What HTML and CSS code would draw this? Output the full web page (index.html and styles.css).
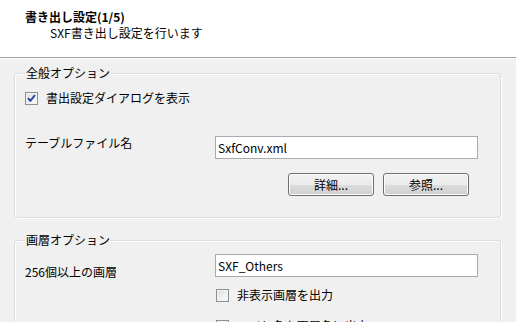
FILE: index.html
```html
<!DOCTYPE html>
<html lang="ja">
<head>
    <meta charset="UTF-8">
    <title>書き出し設定</title>
    <link rel="stylesheet" href="styles.css">
</head>
<body>
    <header class="wizard-head">
        <div class="head-title">書き出し設定(1/5)</div>
        <div class="head-sub">SXF書き出し設定を行います</div>
    </header>

    <main class="wizard-body">
        <!-- 全般 -->
        <fieldset class="group group-general">
            <legend>全般オプション</legend>
            <label class="check">
                <span class="box">
                    <svg width="11" height="11" viewBox="0 0 11 11"><path d="M2 5.2 L4.3 7.8 L9 2.2" fill="none" stroke="#21409a" stroke-width="1.9"/></svg>
                </span>
                書出設定ダイアログを表示
            </label>
            <div class="field-row">
                <span class="field-label">テーブルファイル名</span>
                <input class="text-input" type="text" value="SxfConv.xml">
            </div>
            <div class="button-row">
                <button class="btn">詳細...</button>
                <button class="btn">参照...</button>
            </div>
        </fieldset>

        <!-- 画層 -->
        <fieldset class="group group-layer">
            <legend>画層オプション</legend>
            <div class="field-row">
                <span class="field-label label-low">256個以上の画層</span>
                <input class="text-input" type="text" value="SXF_Others">
            </div>
            <label class="check check-indent">
                <span class="box"></span>
                非表示画層を出力
            </label>
            <label class="check check-indent check-next">
                <span class="box"></span>
                レイヤ名を画層名に出力
            </label>
        </fieldset>
    </main>
</body>
</html>
```

FILE: styles.css
```css
body {
    margin: 0;
    width: 516px;
    height: 322px;
    overflow: hidden;
    background-color: #F0F0F0;
    font-family: "Noto Sans CJK JP", sans-serif;
    font-size: 12px;
    color: #000;
}

.wizard-head {
    box-sizing: border-box;
    height: 58px;
    padding: 9px 0 0 25px;
    background-color: #FFFFFF;
    border-bottom: 1px solid #A0A0A0;
    box-shadow: 0 1px 0 #FFFFFF;
    line-height: 16px;
}

.head-title {
    font-weight: bold;
}

.head-sub {
    padding-left: 25px;
}

.group {
    margin: 8px 15px 0 14px;
    padding: 8px 22px 21px 10px;
    border: 1px solid #D5DFE5;
    border-radius: 3px;
    box-shadow: inset 1px 1px 0 #FFFFFF, 1px 1px 0 #FFFFFF;
}

.group legend {
    padding: 0 1px;
    line-height: 14px;
    background-color: #F0F0F0;
}

.group-layer {
    margin-top: 15px;
    padding-top: 7px;
}

.check {
    display: flex;
    align-items: center;
    gap: 8px;
    height: 20px;
    line-height: 14px;
}

.check-indent {
    margin: 6px 0 0 191px;
}

.check-next {
    margin-top: 11px;
}

.box {
    box-sizing: border-box;
    width: 13px;
    height: 13px;
    border: 1px solid #8E8F8F;
    background: linear-gradient(135deg, #DCDEE0, #FDFDFD);
    box-shadow: inset 0 0 0 1px #F2F3F4;
    display: flex;
    align-items: center;
    justify-content: center;
}

.field-row {
    display: flex;
    align-items: flex-start;
    margin-top: 28px;
}

.group-layer .field-row {
    margin-top: 0;
}

.field-label {
    width: 190px;
    line-height: 14px;
}

.label-low {
    margin-top: 11px;
}

.text-input {
    box-sizing: border-box;
    width: 263px;
    height: 23px;
    margin: 0;
    padding: 0 2px;
    border: 1px solid #A7ABB0;
    background-color: #FFFFFF;
    font-family: inherit;
    font-size: 12px;
    color: #000;
}

.button-row {
    display: flex;
    justify-content: flex-end;
    gap: 9px;
    margin: 14px 9px 0 0;
}

.btn {
    box-sizing: border-box;
    width: 86px;
    height: 23px;
    padding: 0;
    border: 1px solid #707070;
    border-radius: 3px;
    background: linear-gradient(#F2F2F2, #EBEBEB 50%, #DDDDDD 51%, #CFCFCF);
    box-shadow: inset 0 0 0 1px #FCFCFC;
    font-family: inherit;
    font-size: 12px;
    color: #000;
}
```
